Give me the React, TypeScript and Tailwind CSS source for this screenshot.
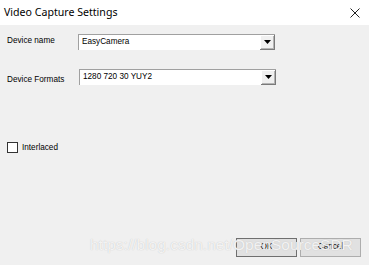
import React from "react";

function Combo({ value, width }: { value: string; width: number }) {
  return (
    <div
      className="flex h-[16px] border-t border-l border-[#a0a0a0] bg-white"
      style={{ width }}
    >
      <div className="flex-1 pl-[3px] text-[8.2px] leading-[14px] text-black">{value}</div>
      <div className="flex h-[15px] w-[15px] items-center justify-center border-r border-b border-[#7a7a7a] bg-[#f0f0f0] shadow-[inset_1px_1px_0_#ffffff,inset_-1px_-1px_0_#b4b4b4]">
        <svg width="7" height="4" viewBox="0 0 7 4">
          <path d="M0 0H7L3.5 4Z" fill="#000" />
        </svg>
      </div>
    </div>
  );
}

export default function App() {
  return (
    <div
      className="relative h-[265px] w-[369px] overflow-hidden bg-[#f0f0f0]"
      style={{ fontFamily: '"Liberation Sans", Arial, sans-serif' }}
    >
      <div className="flex h-[25px] items-center justify-between bg-white pl-[4px] pr-[9px]">
        <span className="text-[11.3px] text-black" style={{ fontFamily: '"Noto Sans", "Liberation Sans", sans-serif', fontSize: "10.6px" }}>
          Video Capture Settings
        </span>
        <svg width="10" height="10" viewBox="0 0 10 10">
          <path d="M0.5 0.5L9.5 9.5M9.5 0.5L0.5 9.5" stroke="#222" strokeWidth="1" />
        </svg>
      </div>

      <div className="flex flex-col px-[7px]">
        <div className="mt-[9px] flex items-start">
          <span className="w-[71px] pt-[2px] text-[8.2px] leading-[10px] text-black">Device name</span>
          <Combo value="EasyCamera" width={197} />
        </div>
        <div className="mt-[19px] flex items-start">
          <span className="w-[72px] pt-[6px] text-[8.2px] leading-[10px] text-black">Device Formats</span>
          <Combo value="1280 720 30 YUY2" width={197} />
        </div>
        <div className="mt-[57px] flex items-center gap-[4px]">
          <div className="h-[11px] w-[11px] border border-[#333] bg-white" />
          <span className="text-[8.2px] leading-[10px] text-black">Interlaced</span>
        </div>
        <div className="mt-[85px] flex justify-end gap-[3px] pr-[1px]">
          <div className="flex h-[19px] w-[61px] items-center justify-center border border-[#6f6f6f] bg-[#e1e1e1] text-[8.2px] text-black">
            OK
          </div>
          <div className="flex h-[19px] w-[61px] items-center justify-center border border-[#adadad] bg-[#e1e1e1] text-[8.2px] text-black">
            Cancel
          </div>
        </div>
      </div>

      <div className="pointer-events-none absolute left-[90px] top-[236px] text-[15.5px] leading-[18px] text-white/80 [text-shadow:0_0_1px_#b8b8b8]">
        https://blog.csdn.net/OpenSourceSDR
      </div>
    </div>
  );
}
